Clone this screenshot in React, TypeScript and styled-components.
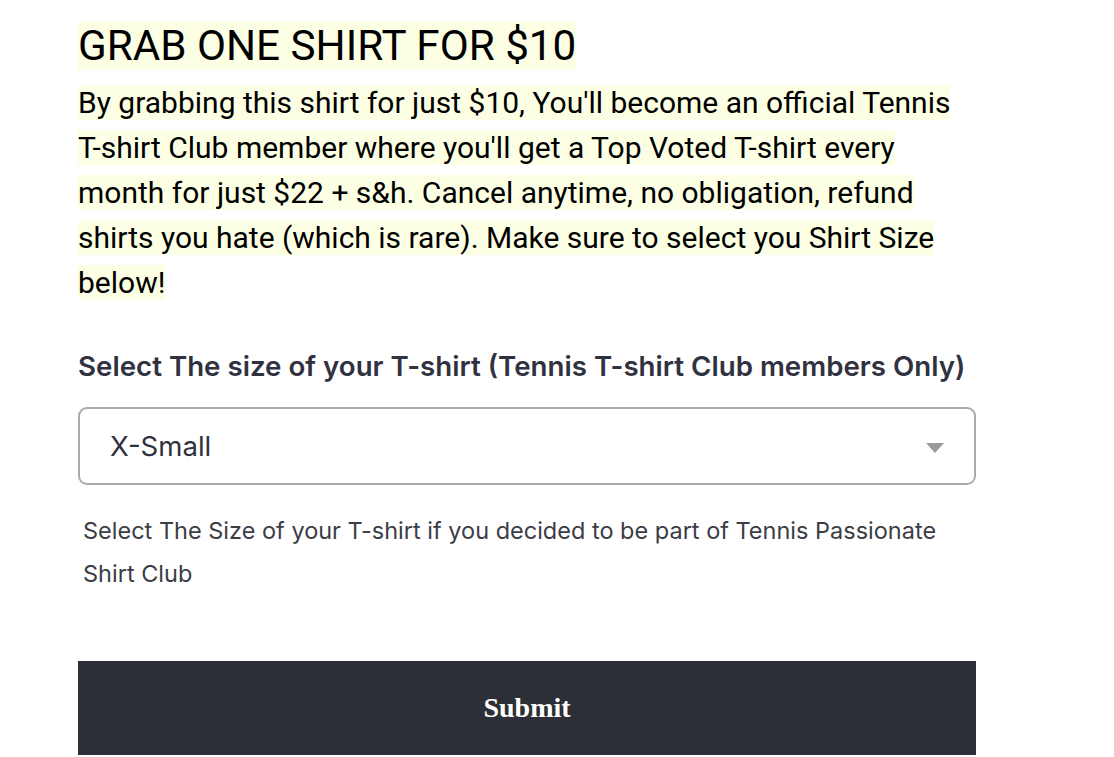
import React, { useState } from 'react'
import styled, { createGlobalStyle } from 'styled-components'

const GlobalStyle = createGlobalStyle`
  body {
    margin: 0;
    background: #ffffff;
  }
`

const Page = styled.div`
  padding: 21px 0 0 78px;
  width: 898px;
`

const Heading = styled.h1`
  margin: 0;
  width: fit-content;
  background: #fdffe4;
  font-family: Roboto, 'Liberation Sans', sans-serif;
  font-weight: 400;
  font-size: 42.2px;
  line-height: 49px;
  color: #000;
`

const Intro = styled.p`
  margin: 10px 0 0;
  width: 898px;
  font-family: Roboto, 'Liberation Sans', sans-serif;
  font-size: 30px;
  line-height: 45px;
  color: #000;
`

const Highlight = styled.span`
  background: #fdffe4;
`

const Label = styled.label`
  display: block;
  margin-top: 43px;
  font-family: Inter, 'Noto Sans', sans-serif;
  font-weight: 600;
  font-size: 27.7px;
  line-height: 36px;
  color: #30323f;
`

const SelectWrap = styled.div`
  position: relative;
  margin-top: 23px;
`

const Select = styled.select`
  appearance: none;
  display: block;
  width: 100%;
  height: 78px;
  box-sizing: border-box;
  padding: 0 60px 0 30px;
  border: 2px solid #ababab;
  border-radius: 9px;
  background: #fff;
  font-family: Inter, 'Noto Sans', sans-serif;
  font-size: 27.6px;
  color: #2f313d;
  outline: none;
`

const Arrow = styled.svg`
  position: absolute;
  right: 32px;
  top: 36px;
  pointer-events: none;
`

const Help = styled.p`
  margin: 24px 0 0 5px;
  width: 880px;
  font-family: Inter, 'Noto Sans', sans-serif;
  font-size: 23.5px;
  line-height: 43px;
  color: #3b3d46;
`

const SubmitButton = styled.button`
  display: block;
  width: 100%;
  height: 94px;
  margin-top: 66px;
  border: none;
  background: #2c3036;
  color: #fff;
  font-family: 'Liberation Serif', 'Times New Roman', serif;
  font-weight: 700;
  font-size: 28px;
  cursor: pointer;
`

const sizes = ['X-Small', 'Small', 'Medium', 'Large', 'X-Large', 'XX-Large']

const App: React.FC = () => {
  const [size, setSize] = useState(sizes[0])

  return (
    <>
      <GlobalStyle />
      <Page>
        <Heading>GRAB ONE SHIRT FOR $10</Heading>
        <Intro>
          <Highlight>
            By grabbing this shirt for just $10, You'll become an official Tennis
            T-shirt Club member where you'll get a Top Voted T-shirt every month for
            just $22 + s&amp;h. Cancel anytime, no obligation, refund shirts you hate
            (which is rare). Make sure to select you Shirt Size below!
          </Highlight>
        </Intro>
        <Label htmlFor="size">
          Select The size of your T-shirt (Tennis T-shirt Club members Only)
        </Label>
        <SelectWrap>
          <Select id="size" value={size} onChange={(e) => setSize(e.target.value)}>
            {sizes.map((s) => (
              <option key={s}>{s}</option>
            ))}
          </Select>
          <Arrow width="18" height="10" viewBox="0 0 18 10">
            <path d="M0 0 L18 0 L9 10 Z" fill="#9a9a9a" />
          </Arrow>
        </SelectWrap>
        <Help>
          Select The Size of your T-shirt if you decided to be part of Tennis
          Passionate Shirt Club
        </Help>
        <SubmitButton type="submit">Submit</SubmitButton>
      </Page>
    </>
  )
}

export default App
